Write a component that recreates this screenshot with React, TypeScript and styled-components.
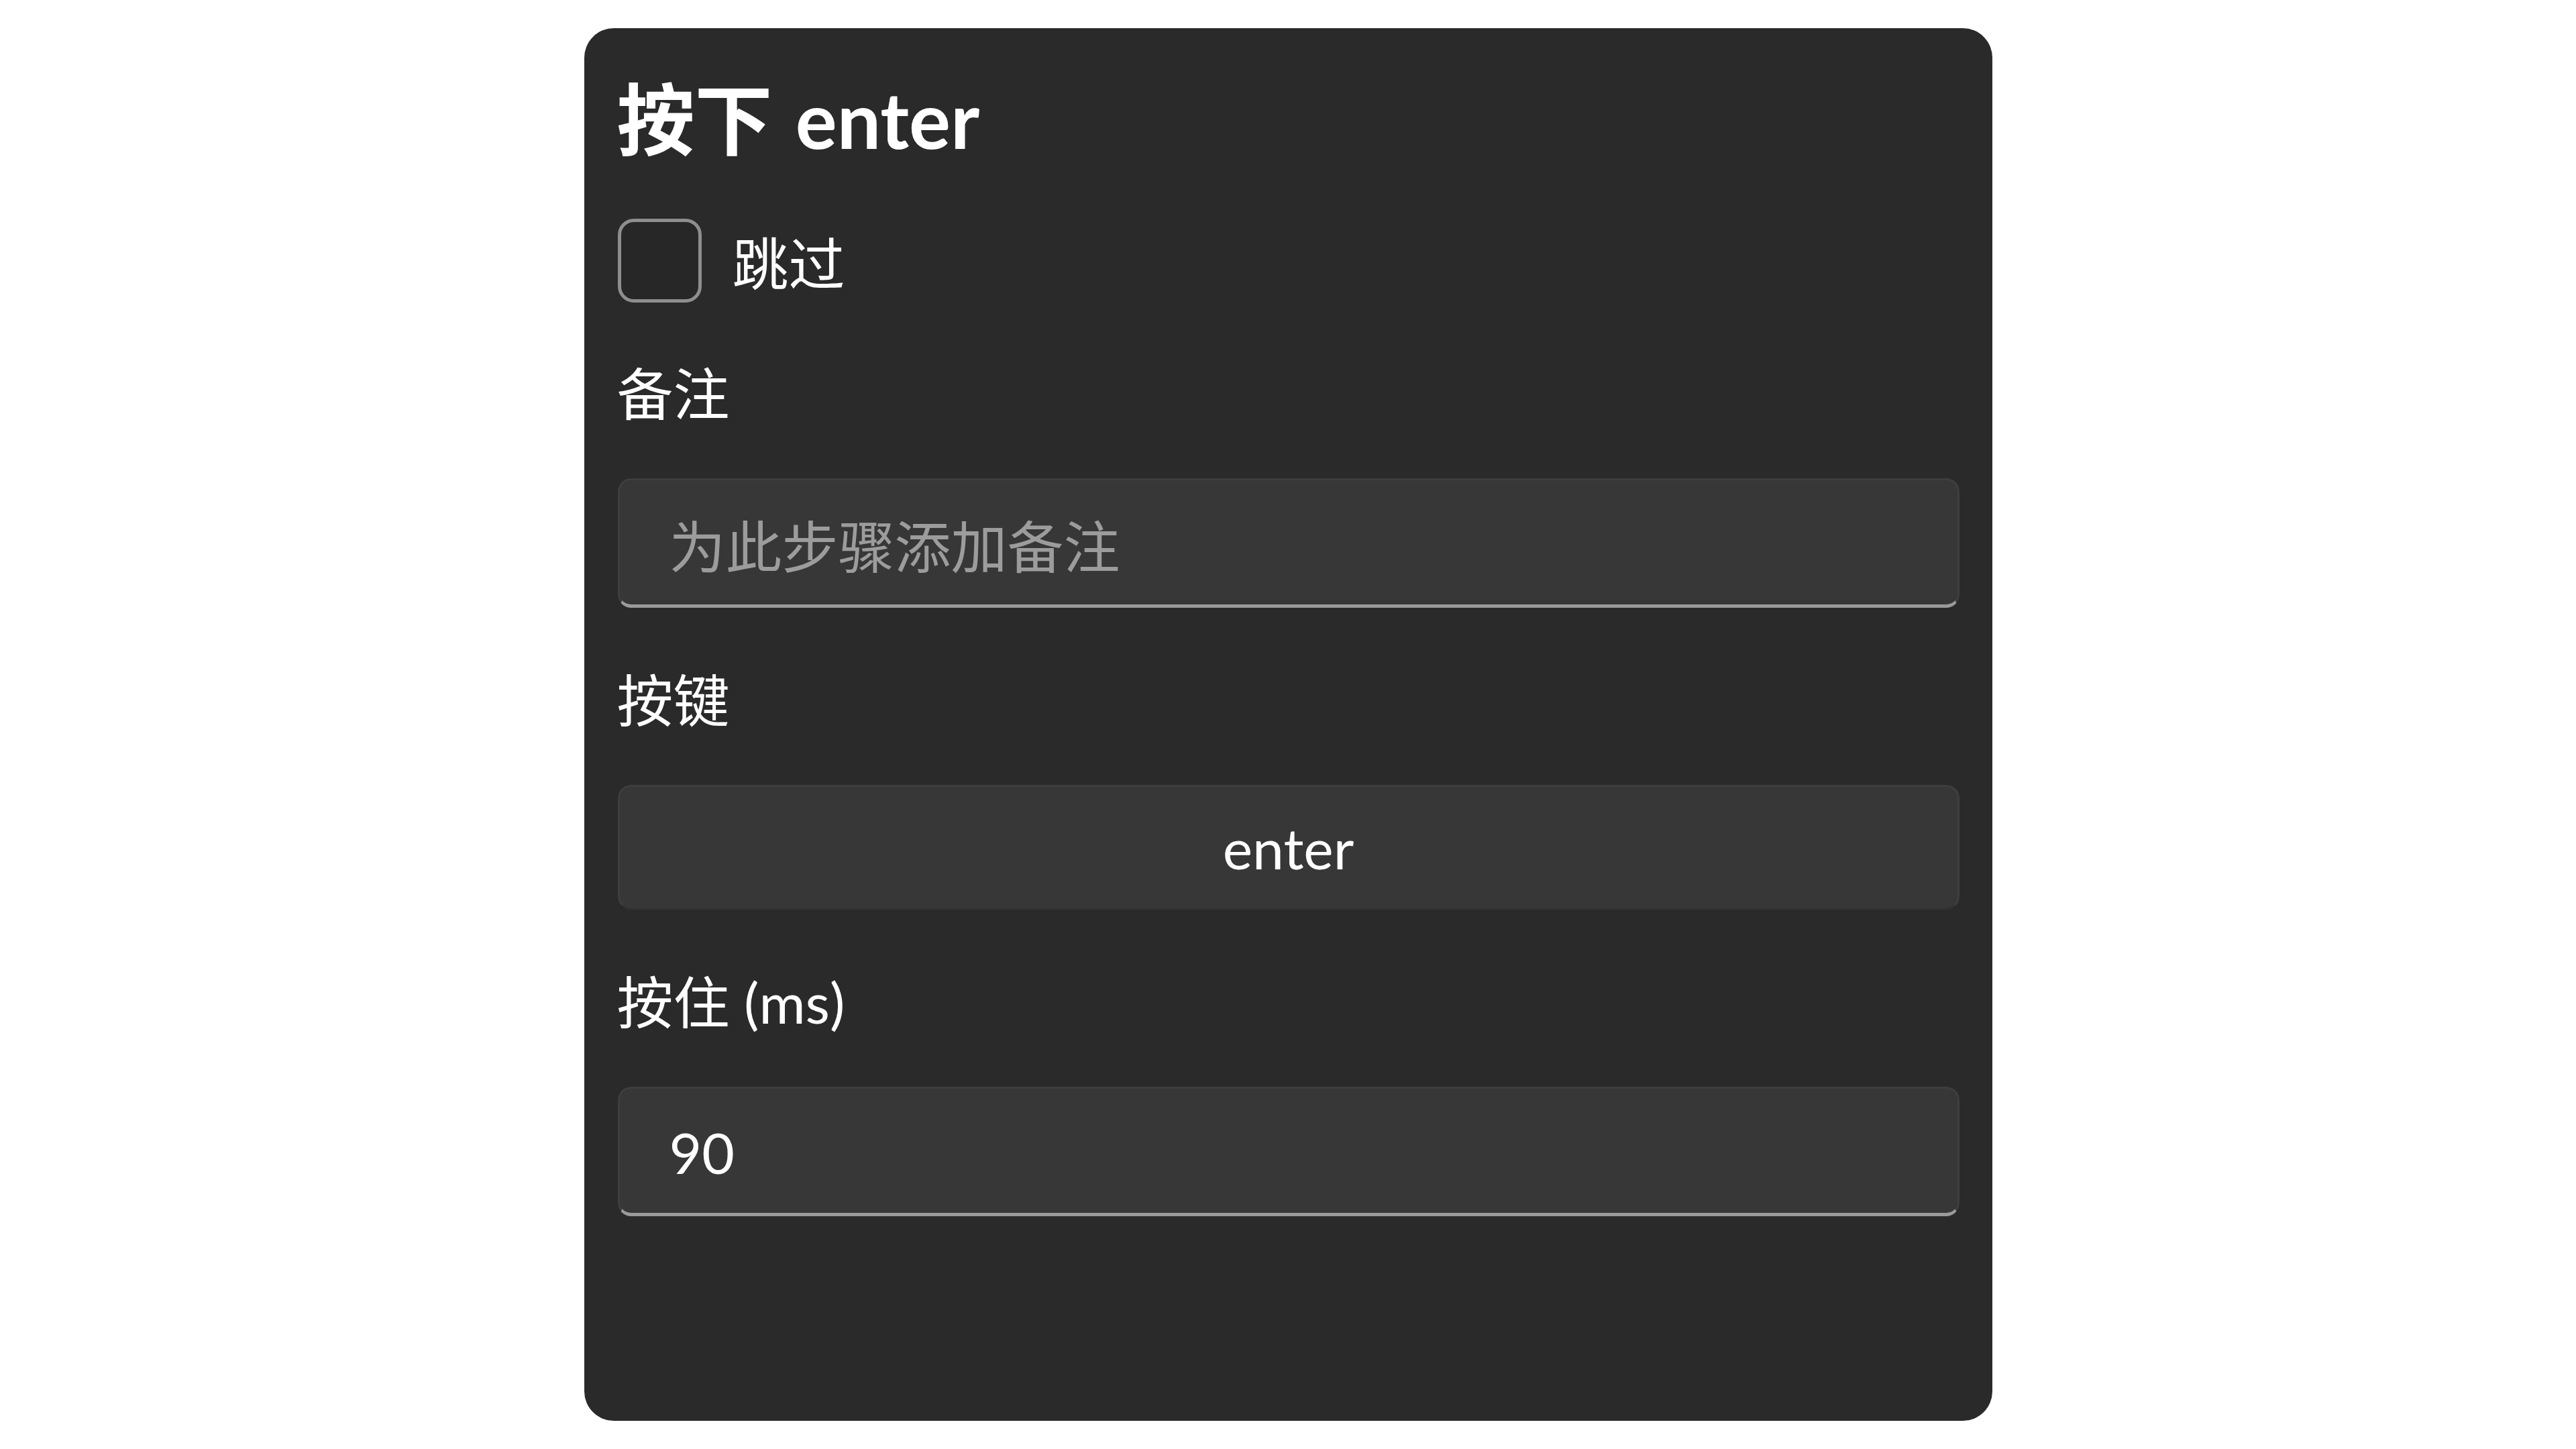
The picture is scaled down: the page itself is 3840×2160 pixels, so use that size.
import React from "react";
import styled, { createGlobalStyle } from "styled-components";

const Global = createGlobalStyle`
  html, body {
    margin: 0;
    padding: 0;
    background: #ffffff;
  }
  body {
    font-family: "Segoe UI", "Lato", "Noto Sans CJK SC", sans-serif;
  }
`;

const Page = styled.div`
  display: flex;
  justify-content: center;
  padding-top: 42px;
  width: 3840px;
  height: 2160px;
  box-sizing: border-box;
`;

const Panel = styled.section`
  width: 2099px;
  height: 2076px;
  box-sizing: border-box;
  background: #2a2a2a;
  border-radius: 44px;
  padding: 42px 49px;
  display: flex;
  flex-direction: column;
  color: #ffffff;
`;

const Title = styled.h1`
  margin: 0;
  height: 196px;
  box-sizing: border-box;
  padding-bottom: 22px;
  display: flex;
  align-items: center;
  font-size: 116px;
  font-weight: 700;
  word-spacing: 6px;
  font-family: "Segoe UI", "Lato", "Noto Sans CJK SC", sans-serif;
`;

const CheckRow = styled.label`
  margin-top: 46px;
  display: flex;
  align-items: center;
  gap: 46px;
  height: 125px;
  padding-left: 1px;
  font-size: 84px;
`;

const Box = styled.span`
  width: 125px;
  height: 125px;
  box-sizing: border-box;
  border: 5px solid #8e8e8e;
  border-radius: 24px;
  background: #272727;
  flex: none;
`;

const Sections = styled.div`
  margin-top: 86px;
  display: flex;
  flex-direction: column;
  gap: 88px;
`;

const Field = styled.div`
  display: flex;
  flex-direction: column;
  gap: 76px;
`;

const Label = styled.div`
  height: 100px;
  box-sizing: border-box;
  padding-bottom: 10px;
  display: flex;
  align-items: center;
  font-size: 84px;
  color: #ffffff;
`;

const TextBox = styled.div<{ $placeholder?: boolean }>`
  height: 193px;
  box-sizing: border-box;
  margin-left: 1px;
  background: #373737;
  border: 3px solid #3e3e3e;
  border-bottom: 5px solid #9a9a9a;
  border-radius: 20px;
  display: flex;
  align-items: center;
  padding-left: 74px;
  padding-top: 4px;
  font-size: 84px;
  color: ${(p) => (p.$placeholder ? "#9c9c9c" : "#ffffff")};
`;

const KeyButton = styled.button`
  height: 186px;
  box-sizing: border-box;
  margin-left: 1px;
  background: #373737;
  border: 3px solid #3e3e3e;
  border-bottom-color: #333333;
  border-radius: 20px;
  display: flex;
  align-items: center;
  justify-content: center;
  font-size: 84px;
  font-family: inherit;
  color: #ffffff;
  padding: 0;
`;

export default function App() {
  return (
    <>
      <Global />
      <Page>
        <Panel>
          <Title>按下 enter</Title>
          <CheckRow>
            <Box />
            <span>跳过</span>
          </CheckRow>
          <Sections>
            <Field>
              <Label>备注</Label>
              <TextBox $placeholder>为此步骤添加备注</TextBox>
            </Field>
            <Field>
              <Label>按键</Label>
              <KeyButton>enter</KeyButton>
            </Field>
            <Field>
              <Label>按住 (ms)</Label>
              <TextBox>90</TextBox>
            </Field>
          </Sections>
        </Panel>
      </Page>
    </>
  );
}
